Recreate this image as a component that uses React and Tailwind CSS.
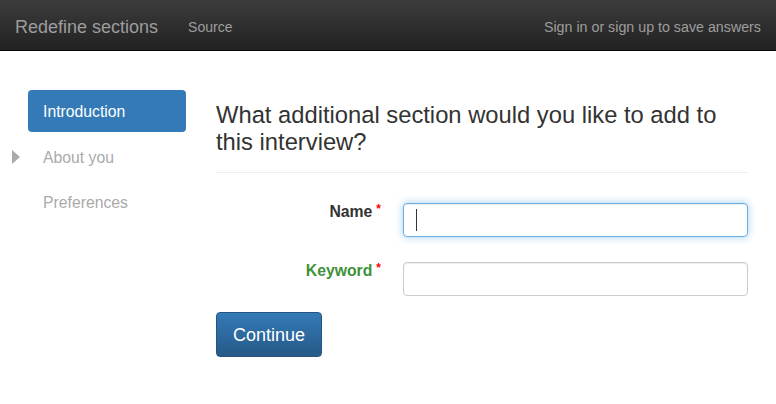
import React from 'react';

const font = { fontFamily: '"Liberation Sans", Arial, sans-serif' };

function Navbar() {
  return (
    <div className="flex h-[51px] items-center justify-between border-b border-[#080808] bg-gradient-to-b from-[#3c3c3c] to-[#222222] px-[15px] pt-[5px]">
      <div className="flex items-center">
        <span className="text-[18px] text-[#9d9d9d]">Redefine sections</span>
        <span className="ml-[30px] text-[14px] text-[#9d9d9d]">Source</span>
      </div>
      <span className="text-[14.25px] text-[#9d9d9d]">Sign in or sign up to save answers</span>
    </div>
  );
}

function Sidebar() {
  const items = ['Introduction', 'About you', 'Preferences'];
  return (
    <div className="flex w-[186px] shrink-0 flex-col gap-[3px]">
      {items.map((item, i) => (
        <div key={item} className="relative flex h-[42px] items-center pl-[28px]">
          {i === 1 && (
            <span className="absolute left-[12px] top-[15px] h-0 w-0 border-y-[7px] border-l-[8px] border-y-transparent border-l-[#aaaaaa]" />
          )}
          <div
            className={
              i === 0
                ? 'flex h-full w-full items-center rounded-[4px] bg-[#337ab7] px-[15px] pt-[2px] text-[15.75px] text-white'
                : 'flex h-full w-full items-center px-[15px] pt-[4px] text-[15.75px] text-[#aaaaaa]'
            }
          >
            {item}
          </div>
        </div>
      ))}
    </div>
  );
}

function Field({ label, green, focused }) {
  return (
    <div className="flex items-start gap-[22px]">
      <div className="relative -top-[1px] w-[165px] shrink-0 text-right leading-[20px]">
        <span className={`text-[15.75px] font-bold ${green ? 'text-[#3e923a]' : 'text-[#333333]'}`}>{label}</span>
        <span className="relative -top-[4px] ml-[4px] text-[12px] font-bold text-[#ff0000]">*</span>
      </div>
      <div
        className={
          focused
            ? 'relative h-[34px] flex-1 rounded-[4px] border border-[#66afe9] bg-white shadow-[inset_0_1px_1px_rgba(0,0,0,0.075),0_0_8px_rgba(102,175,233,0.6)]'
            : 'relative h-[34px] flex-1 rounded-[4px] border border-[#cccccc] bg-white shadow-[inset_0_1px_1px_rgba(0,0,0,0.075)]'
        }
      >
        {focused && <span className="absolute left-[12px] top-[5px] h-[22px] w-px bg-[#333333]" />}
      </div>
    </div>
  );
}

export default function App() {
  return (
    <div className="h-[404px] w-[776px] overflow-hidden bg-white" style={font}>
      <Navbar />
      <div className="flex pt-[39px] pr-[28px]">
        <Sidebar />
        <div className="ml-[30px] flex-1">
          <h1 className="mt-[11px] text-[23.75px] leading-[27px] text-[#333333]">
            What additional section would you like to add to this interview?
          </h1>
          <div className="mt-[17px] h-px bg-[#eeeeee]" />
          <div className="mt-[30px] flex flex-col gap-[25px]">
            <Field label="Name" focused />
            <Field label="Keyword" green />
          </div>
          <button className="mt-[16px] h-[45px] rounded-[4px] border border-[#245580] bg-gradient-to-b from-[#337ab7] to-[#265a88] px-[16px] pt-[1px] text-[18px] text-white">
            Continue
          </button>
        </div>
      </div>
    </div>
  );
}
